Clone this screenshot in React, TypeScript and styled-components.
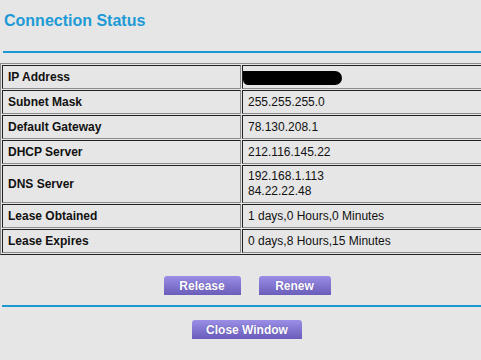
import React from "react";
import styled, {createGlobalStyle} from "styled-components";

const GlobalStyle = createGlobalStyle`
  html, body {
    margin: 0;
    padding: 0;
    background: #e6e6e6;
    overflow: hidden;
  }
  body {
    font-family: "Liberation Sans", Arial, sans-serif;
  }
`;

const Page = styled.div`
  width: 494px;
  display: flex;
  flex-direction: column;
`;

const Title = styled.h1`
  margin: 0;
  padding: 12px 4px 0;
  height: 39px;
  font-size: 16px;
  line-height: 18px;
  font-weight: bold;
  color: #1d9ad6;
`;

const Rule = styled.div<{ $indent: number }>`
  height: 2px;
  margin-left: ${p => p.$indent}px;
  background: #1a98cf;
`;

const Table = styled.table`
  margin-top: 10px;
  width: 100%;
  table-layout: fixed;
  border-collapse: separate;
  border-spacing: 1px;
  border-style: solid;
  border-width: 1px;
  border-color: #8c8c8c #202020 #202020 #8c8c8c;
  font-size: 12px;
  color: #111;
`;

const Cell = styled.td<{ $label?: boolean; $multi?: boolean }>`
  box-sizing: border-box;
  width: ${p => (p.$label ? "239px" : "auto")};
  padding: ${p => (p.$multi ? "3px 4px 3px 5px" : "4px 4px 3px 5px")};
  line-height: 15px;
  vertical-align: middle;
  font-weight: ${p => (p.$label ? "bold" : "normal")};
  border-style: solid;
  border-width: 1px;
  border-color: #202020 #8c8c8c #8c8c8c #202020;
`;

const Hidden = styled.span`
  display: inline-block;
  width: 99px;
  height: 14px;
  margin-left: -5px;
  border-radius: 0 8px 8px 6px;
  background: #000;
  vertical-align: middle;
`;

const ButtonRow = styled.div<{ $top: number; $bottom: number }>`
  display: flex;
  justify-content: center;
  gap: 18px;
  margin-top: ${p => p.$top}px;
  margin-bottom: ${p => p.$bottom}px;
`;

const Button = styled.button<{ $width: number }>`
  width: ${p => p.$width}px;
  height: 19px;
  padding: 0;
  border: none;
  border-radius: 3px 3px 0 0;
  background: linear-gradient(#9a8ee6, #6a5cba);
  color: #fff;
  font-family: "Liberation Sans", Arial, sans-serif;
  font-size: 12px;
  font-weight: bold;
  text-shadow: 0 0 1px #5a4aa0;
  cursor: pointer;
`;

const rows: [string, React.ReactNode][] = [
  ["IP Address", <Hidden/>],
  ["Subnet Mask", "255.255.255.0"],
  ["Default Gateway", "78.130.208.1"],
  ["DHCP Server", "212.116.145.22"],
  ["DNS Server", <>192.168.1.113<br/>84.22.22.48</>],
  ["Lease Obtained", "1 days,0 Hours,0 Minutes"],
  ["Lease Expires", "0 days,8 Hours,15 Minutes"],
];

export default function App() {
  return (
    <Page>
      <GlobalStyle/>
      <Title>Connection Status</Title>
      <Rule $indent={3}/>
      <Table>
        <tbody>
        {rows.map(([label, value]) => {
          const multi = label === "DNS Server";
          return (
            <tr key={label}>
              <Cell $label $multi={multi}>{label}</Cell>
              <Cell $multi={multi}>{value}</Cell>
            </tr>
          );
        })}
        </tbody>
      </Table>
      <ButtonRow $top={21} $bottom={10}>
        <Button $width={77}>Release</Button>
        <Button $width={72}>Renew</Button>
      </ButtonRow>
      <Rule $indent={2}/>
      <ButtonRow $top={13} $bottom={0}>
        <Button $width={110}>Close Window</Button>
      </ButtonRow>
    </Page>
  );
}
